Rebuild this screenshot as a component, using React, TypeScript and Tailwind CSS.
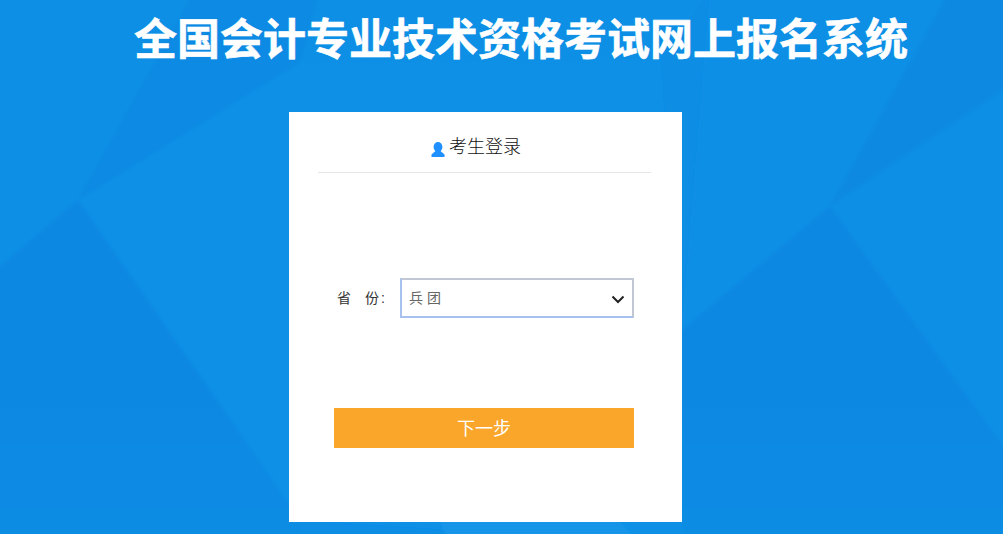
const cjk = 'font-["Liberation_Sans","Noto_Sans_CJK_SC",sans-serif]';

function Background() {
  return (
    <svg className="absolute inset-0 h-full w-full" viewBox="0 0 1003 534" preserveAspectRatio="none">
      <defs>
        <filter id="soft" x="-5%" y="-5%" width="110%" height="110%">
          <feGaussianBlur stdDeviation="1.6" />
        </filter>
        <linearGradient id="shade" gradientUnits="userSpaceOnUse" x1="0" y1="400" x2="0" y2="534">
          <stop offset="0" stopColor="#0a88e2" />
          <stop offset="1" stopColor="#0d8ce4" />
        </linearGradient>
      </defs>
      <rect width="1003" height="534" fill="#0e8de5" />
      <g filter="url(#soft)">
        <polygon points="-10,-10 195,-10 78,200 -10,275" fill="#0f8fe5" />
        <polygon points="195,-10 320,-10 300,62 78,200" fill="#0c8ae3" />
        <polygon points="78,200 300,62 660,60 682,330 682,544 300,520" fill="#1090e6" />
        <polygon points="-10,275 78,200 300,520 300,544 -10,544" fill="url(#shade)" />
        <polygon points="320,-10 710,-10 660,60 300,62" fill="#0f8fe5" />
        <polygon points="440,522 620,522 640,544 450,544" fill="#1395e8" />
        <polygon points="710,-10 950,-10 830,206 682,330" fill="#0f8fe5" />
        <polygon points="950,-10 1013,-10 1013,84 830,206" fill="#0b89e2" />
        <polygon points="830,206 1013,84 1013,460" fill="#0f8fe5" />
        <polygon points="682,330 830,206 1013,460 1013,544 682,544" fill="url(#shade)" />
      </g>
    </svg>
  );
}

function UserIcon() {
  return (
    <svg width="14" height="15" viewBox="0 0 14 15" className="mt-[4px] mr-[4px] shrink-0">
      <ellipse cx="7" cy="5" rx="4.4" ry="5" fill="#1e90ff" />
      <path d="M4.5 9 L0.5 12.5 Q0 15 1 15 H13 Q14 15 13.5 12.5 L9.5 9 Z" fill="#1e90ff" />
    </svg>
  );
}

export default function App() {
  return (
    <div className={`relative h-screen w-full overflow-hidden ${cjk}`}>
      <Background />
      <div className="relative">
        <h1 className="pl-[134px] pt-[15px] h-[112px] text-[43px] leading-[50px] font-bold text-white whitespace-nowrap [-webkit-text-stroke:0.6px_white]">
          全国会计专业技术资格考试网上报名系统
        </h1>
        <div className="ml-[289px] h-[410px] w-[393px] bg-white pl-[29px] pr-[31px]">
          <div className="flex h-[61px] items-center justify-center border-b border-[#e6e6e6] pt-[11px] pr-[17px]">
            <UserIcon />
            <span className="text-[18px] font-light text-[#111]">考生登录</span>
          </div>
          <div className="mt-[105px] flex items-center pl-[19px]">
            <label className="w-[48px] whitespace-nowrap text-[14px] text-[#333]">
              省<span className="ml-[14px]">份<span className="ml-[2px]">:</span></span>
            </label>
            <div className="relative ml-[15px]">
              <select
                defaultValue="兵 团"
                className="h-[40px] w-[234px] appearance-none border-2 border-[#c2c7d4] border-b-[#a8c2f0] border-l-[#a8c2f0] bg-white pl-[7px] text-[14px] text-[#666] outline-none"
              >
                <option>兵 团</option>
              </select>
              <svg
                width="14"
                height="9"
                viewBox="0 0 14 9"
                className="pointer-events-none absolute right-[9px] top-[17px]"
                fill="none"
                stroke="#222"
                strokeWidth="2"
              >
                <path d="M1.5 1.5 L7 7 L12.5 1.5" />
              </svg>
            </div>
          </div>
          <button className="ml-[16px] mt-[90px] h-[40px] w-[300px] bg-[#f9a62a] pt-[3px] text-[18px] text-white">
            下一步
          </button>
        </div>
      </div>
    </div>
  );
}
